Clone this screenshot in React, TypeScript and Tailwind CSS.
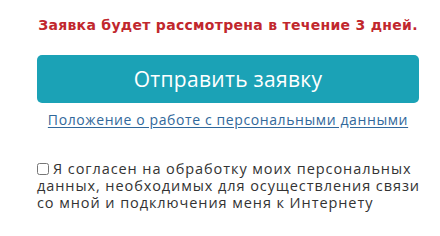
import React, { useState } from 'react';

const App: React.FC = () => {
  const [agree, setAgree] = useState(false);

  return (
    <div className="w-[440px] h-[236px] bg-white pl-[37px] font-['Open_Sans',sans-serif]">
      <div className="w-[382px] flex flex-col">
        <p className="mt-[16px] text-center font-['DejaVu_Sans',sans-serif] font-bold text-[14px] leading-[18px] text-[#c1272d] tracking-[0.3px]">
          Заявка будет рассмотрена в течение 3 дней.
        </p>

        <button className="mt-[21px] h-[48px] w-full rounded-[5px] bg-[#1ba2b6] text-white text-[21px] tracking-[0.3px] leading-none">
          Отправить заявку
        </button>

        <a href="#" className="mt-[8px] text-center text-[14px] leading-[18px] text-[#31689b] tracking-[0.6px] underline underline-offset-2">
          Положение о работе с персональными данными
        </a>

        <label className="mt-[31px] block whitespace-nowrap text-[14.5px] leading-[17px] text-[#333] tracking-[0.92px]">
          <input
            type="checkbox"
            checked={agree}
            onChange={() => setAgree(!agree)}
            className="w-[12px] h-[12px] mr-[4px] align-[-1px]"
          />
          Я согласен на обработку моих персональных
          <br />
          данных, необходимых для осуществления связи
          <br />
          со мной и подключения меня к Интернету
        </label>
      </div>
    </div>
  );
};

export default App;
